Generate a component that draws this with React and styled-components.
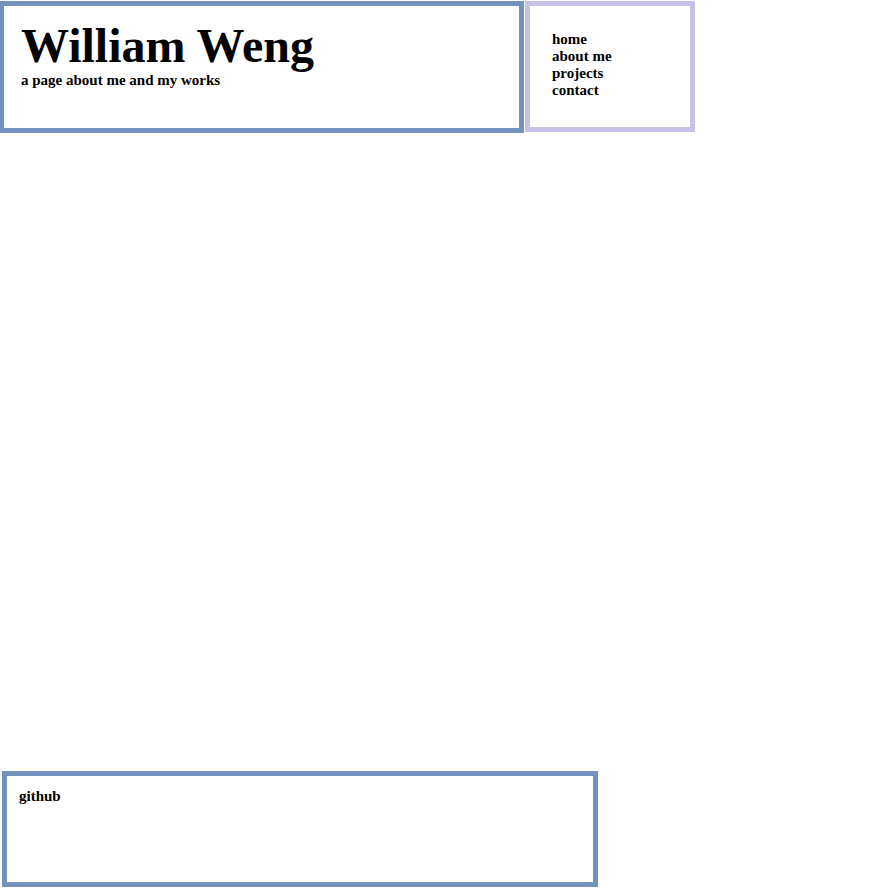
import React from 'react';
import styled, { createGlobalStyle } from 'styled-components';

const GlobalStyle = createGlobalStyle`
  html, body {
    margin: 0;
    padding: 0;
    background: #ffffff;
  }
  body {
    font-family: 'Liberation Serif', 'Times New Roman', serif;
    color: #000000;
  }
`;

const Page = styled.div`
  display: flex;
  flex-direction: column;
  min-height: 888px;
  box-sizing: border-box;
  padding-top: 1px;
`;

const TopRow = styled.div`
  display: flex;
  align-items: flex-start;
  gap: 1px;
`;

const Header = styled.header`
  box-sizing: border-box;
  width: 524px;
  height: 132px;
  border: 5px solid #7393be;
  border-left-width: 4px;
  padding: 14px 0 0 17px;
`;

const Title = styled.h1`
  margin: 0;
  font-size: 48px;
  line-height: 52px;
  font-weight: bold;
`;

const Subtitle = styled.p`
  margin: 0;
  font-size: 15px;
  line-height: 17px;
  font-weight: bold;
`;

const Nav = styled.nav`
  box-sizing: border-box;
  width: 170px;
  height: 131px;
  border: 5px solid #c8c0e5;
  padding: 25px 0 0 22px;
`;

const NavList = styled.ul`
  list-style: none;
  margin: 0;
  padding: 0;
`;

const NavItem = styled.li`
  font-size: 15px;
  line-height: 17px;
  font-weight: bold;
`;

const Main = styled.main`
  flex: 1;
`;

const Footer = styled.footer`
  box-sizing: border-box;
  width: 596px;
  height: 116px;
  margin: 0 0 1px 2px;
  border: 5px solid #7393be;
  padding: 12px 0 0 12px;
`;

const FooterLink = styled.div`
  font-size: 15px;
  line-height: 17px;
  font-weight: bold;
`;

const links = ['home', 'about me', 'projects', 'contact'];

export default function App() {
  return (
    <Page>
      <GlobalStyle />
      <TopRow>
        <Header>
          <Title>William Weng</Title>
          <Subtitle>a page about me and my works</Subtitle>
        </Header>
        <Nav>
          <NavList>
            {links.map((link) => (
              <NavItem key={link}>{link}</NavItem>
            ))}
          </NavList>
        </Nav>
      </TopRow>
      <Main />
      <Footer>
        <FooterLink>github</FooterLink>
      </Footer>
    </Page>
  );
}
